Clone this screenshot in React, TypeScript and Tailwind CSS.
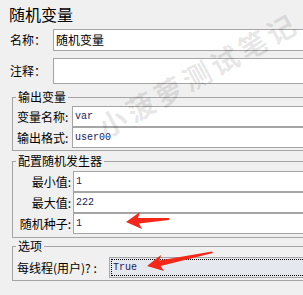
import React from "react";

const cjk = { fontFamily: '"Noto Sans CJK SC", "Noto Sans", sans-serif' };
const mono = { fontFamily: '"Liberation Mono", "Noto Sans CJK SC", monospace' };

function Field({ value, className = "" }: { value: string; className?: string }) {
  return (
    <div
      className={`flex-1 h-[21px] bg-white border border-[#a5a5a5] pl-[2px] flex items-center text-[10px] text-[#221c58] ${className}`}
      style={mono}
    >
      {value}
    </div>
  );
}

export default function App() {
  return (
    <div className="relative w-[303px] h-[295px] overflow-hidden bg-[#f0f0f0] text-black" style={cjk}>
      <div className="w-[340px] pt-[3px] flex flex-col">
        <div className="pl-[9px] h-[22px] leading-[22px] text-[16px]">随机变量</div>

        <div className="mt-[4px] pl-[10px] flex items-center h-[22px]">
          <div className="w-[43px] text-[12px] leading-[22px]">名称：</div>
          <div className="flex-1 h-[22px] bg-white border border-[#a5a5a5] pl-[2px] flex items-center text-[12px]">
            随机变量
          </div>
        </div>

        <div className="mt-[7px] pl-[10px] flex items-center h-[26px]">
          <div className="w-[43px] text-[12px] leading-[26px]">注释：</div>
          <div className="flex-1 h-[26px] bg-white border border-[#a5a5a5]" />
        </div>

        <fieldset className="mt-[5px] ml-[12px] border border-[#a5a5a5] p-0 m-0">
          <legend className="ml-[3px] px-[2px] text-[12px] leading-[16px]">输出变量</legend>
          <div className="pl-[4px] pt-[1px] pb-[2px] flex flex-col">
            <div className="flex items-center">
              <div className="w-[55px] text-[12px] leading-[21px]">变量名称:</div>
              <Field value="var" />
            </div>
            <div className="flex items-center">
              <div className="w-[55px] text-[12px] leading-[21px]">输出格式:</div>
              <Field value="user00" />
            </div>
          </div>
        </fieldset>

        <fieldset className="mt-[2px] ml-[12px] border border-[#a5a5a5] p-0 m-0">
          <legend className="ml-[3px] px-[2px] text-[12px] leading-[16px]">配置随机发生器</legend>
          <div className="pl-[4px] pt-[2px] pb-[3px] flex flex-col">
            <div className="flex items-center">
              <div className="w-[54px] mr-[2px] text-right text-[12px] leading-[21px]">最小值:</div>
              <Field value="1" />
            </div>
            <div className="flex items-center">
              <div className="w-[54px] mr-[2px] text-right text-[12px] leading-[21px]">最大值:</div>
              <Field value="222" />
            </div>
            <div className="flex items-center">
              <div className="w-[54px] mr-[2px] text-right text-[12px] leading-[21px]">随机种子:</div>
              <Field value="1" />
            </div>
          </div>
        </fieldset>

        <fieldset className="ml-[12px] border border-[#a5a5a5] p-0 m-0">
          <legend className="ml-[3px] px-[2px] text-[12px] leading-[16px]">选项</legend>
          <div className="pl-[4px] pt-[3px] pb-[2px] flex items-center">
            <div className="w-[92px] text-[12px] leading-[21px] whitespace-nowrap">每线程(用户)? :</div>
            <div className="flex-1 h-[21px] bg-[#e5e8ee] border border-[#a5a5a5] p-[1px]">
              <div className="h-full border border-dotted border-black pl-[1px] flex items-center text-[10px] text-[#221c58]" style={mono}>
                True
              </div>
            </div>
          </div>
        </fieldset>
      </div>

      <div
        className="absolute left-[198px] top-[74px] -translate-x-1/2 -translate-y-1/2 rotate-[-29deg] whitespace-nowrap text-[28px] font-bold tracking-[4px] text-black/10 pointer-events-none"
      >
        小菠萝测试笔记
      </div>

      <svg className="absolute left-0 top-0 pointer-events-none" width="303" height="295" viewBox="0 0 303 295">
        <polygon
          points="126,222 140,212 138,218 169,218 169,220 139,223.5 142,229"
          fill="#f5261a"
        />
        <polygon
          points="147,266 161,255 159.5,260.5 212,251.5 213,253 160.5,266 164,271"
          fill="#f5261a"
        />
      </svg>
    </div>
  );
}
